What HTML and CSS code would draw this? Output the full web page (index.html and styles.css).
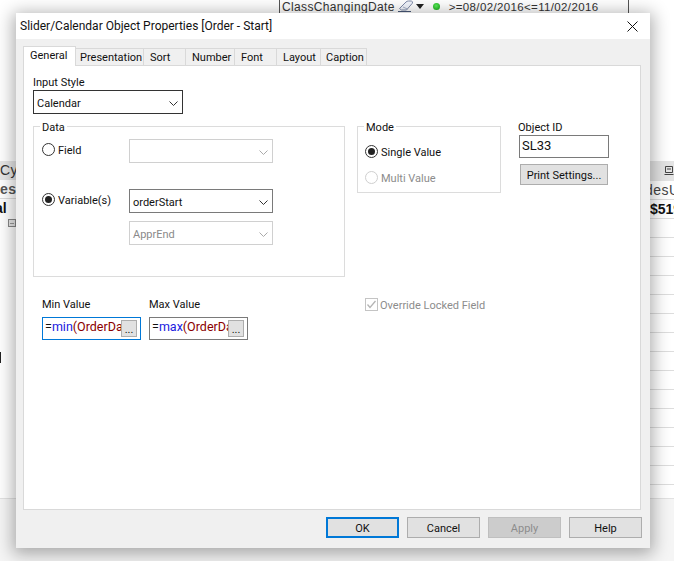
FILE: index.html
```html
<!DOCTYPE html>
<html lang="en">
<head>
<meta charset="utf-8">
<title>Slider/Calendar Object Properties</title>
<link rel="stylesheet" href="styles.css">
</head>
<body>
<div class="app">
  <div class="app-caption">
    <span class="caption-name">ClassChangingDate</span>
    <svg class="eraser" width="16" height="13" viewBox="0 0 16 13"><path d="M1.500 8.500 8 2q1-1 2.500-1h2.800q2 .5 1 2.300L8.500 10H3.500z" fill="#f2f5fc" stroke="#7f8aa8"/><path d="M5 7 9.500 9" stroke="#a9b4cc" fill="none"/><path d="M0 11.500h13" stroke="#4a5a7a"/></svg>
    <span class="caret"></span>
    <span class="led"></span>
    <span class="caption-value">&gt;=08/02/2016&lt;=11/02/2016</span>
  </div>
  <div class="left-frag">
    <div class="frag-head">Cyc</div>
    <div class="frag-row">es</div>
    <div class="frag-total">al</div>
    <div class="frag-minus"></div>
  </div>
  <div class="left-mark"></div>
  <div class="right-frag">
    <div class="rf-head"><svg width="10" height="10" viewBox="0 0 10 10"><path d="M1.500.5h7v6h-7zM.5 8.500h9M3 3h4" fill="none" stroke="#444"/></svg></div>
    <div class="rf-row">desU</div>
    <div class="rf-total">$519</div>
    <div class="rf-line"></div><div class="rf-line"></div><div class="rf-line"></div><div class="rf-line"></div>
    <div class="rf-line"></div><div class="rf-line"></div><div class="rf-line"></div><div class="rf-line"></div>
    <div class="rf-line"></div><div class="rf-line"></div><div class="rf-line"></div><div class="rf-line"></div>
    <div class="rf-line"></div><div class="rf-line"></div>
  </div>
  <div class="app-foot"></div>
</div>

<div class="dialog">
  <div class="titlebar">
    <span class="title">Slider/Calendar Object Properties [Order - Start]</span>
    <svg class="close" width="11" height="11" viewBox="0 0 11 11"><path d="M.5.500l10 10M10.500.500l-10 10" stroke="#111" fill="none"/></svg>
  </div>
  <div class="body">
    <div class="tabs">
      <div class="tab active">General</div>
      <div class="tab t-pres">Presentation</div>
      <div class="tab t-sort">Sort</div>
      <div class="tab t-num">Number</div>
      <div class="tab t-font">Font</div>
      <div class="tab t-lay">Layout</div>
      <div class="tab t-cap">Caption</div>
    </div>
    <div class="panel">
      <div class="field-label">Input Style</div>
      <div class="select input-style"><span>Calendar</span><svg class="chev" width="9" height="5" viewBox="0 0 9 5"><path d="M.5.500 4.500 4.500 8.500.500" fill="none" stroke="#333"/></svg></div>

      <div class="mid-row">
        <fieldset class="group data-group">
          <legend>Data</legend>
          <div class="data-grid">
            <div class="radio-line r-field"><span class="radio"></span><span class="radio-text">Field</span></div>
            <div class="select data-select disabled"><span></span><svg class="chev" width="9" height="5" viewBox="0 0 9 5"><path d="M.5.500 4.500 4.500 8.500.500" fill="none" stroke="#aaa"/></svg></div>
            <div class="radio-line r-var"><span class="radio on"></span><span class="radio-text">Variable(s)</span></div>
            <div class="select data-select s-var active-sel"><span>orderStart</span><svg class="chev" width="9" height="5" viewBox="0 0 9 5"><path d="M.5.500 4.500 4.500 8.500.500" fill="none" stroke="#333"/></svg></div>
            <div class="select data-select s-appr disabled"><span>ApprEnd</span><svg class="chev" width="9" height="5" viewBox="0 0 9 5"><path d="M.5.500 4.500 4.500 8.500.500" fill="none" stroke="#aaa"/></svg></div>
          </div>
        </fieldset>

        <fieldset class="group mode-group">
          <legend>Mode</legend>
          <div class="radio-line m-single"><span class="radio on"></span><span class="radio-text">Single Value</span></div>
          <div class="radio-line m-multi off"><span class="radio dim"></span><span class="radio-text">Multi Value</span></div>
        </fieldset>

        <div class="object-col">
          <div class="obj-label">Object ID</div>
          <div class="obj-input">SL33</div>
          <div class="btn print-btn">Print Settings...</div>
        </div>
      </div>

      <div class="value-row">
        <div class="value-col">
          <div class="field-label v-label">Min Value</div>
          <div class="expr focus"><span class="e-op">=</span><span class="e-fn">min</span><span class="e-ref">(OrderDa</span><span class="dots">...</span></div>
        </div>
        <div class="value-col">
          <div class="field-label v-label">Max Value</div>
          <div class="expr"><span class="e-op">=</span><span class="e-fn">max</span><span class="e-ref">(OrderDa</span><span class="dots">...</span></div>
        </div>
        <div class="override">
          <svg width="13" height="13" viewBox="0 0 13 13"><rect x=".5" y=".5" width="12" height="12" fill="#fff" stroke="#c4c4c4"/><path d="M2.500 6.500 5 9.500 10.500 3" fill="none" stroke="#b4b4b4" stroke-width="1.300"/></svg>
          <span class="override-text">Override Locked Field</span>
        </div>
      </div>
    </div>
    <div class="footer">
      <div class="btn foot ok">OK</div>
      <div class="btn foot">Cancel</div>
      <div class="btn foot apply">Apply</div>
      <div class="btn foot">Help</div>
    </div>
  </div>
</div>
</body>
</html>
```

FILE: styles.css
```css
* { box-sizing: border-box; }
html, body { margin: 0; padding: 0; }
body {
  width: 674px;
  height: 561px;
  position: relative;
  overflow: hidden;
  background: #fff;
  font-family: Roboto, "Liberation Sans", sans-serif;
  font-size: 11px;
  color: #111;
}

/* Application behind the dialog */
.app { position: absolute; inset: 0; background: #fff; color: #333; font-family: "Liberation Sans", sans-serif; }
.app-foot { position: absolute; left: 0; right: 0; top: 498px; bottom: 0; background: #f5f5f5; border-top: 1px solid #e2e2e2; }
.app-caption {
  position: absolute; left: 279px; top: 0; width: 350px; height: 13px;
  border-left: 1px solid #555; border-right: 1px solid #555;
  display: flex; align-items: center; padding-left: 2px;
  font-size: 12px; letter-spacing: .35px; white-space: nowrap;
}
.caption-name { color: #333; }
.eraser { margin-left: 3px; flex: none; }
.caret { width: 0; height: 0; margin-left: 2px; border: 4px solid transparent; border-top: 5px solid #222; border-bottom: 0; }
.led { width: 7px; height: 7px; margin-left: 9px; border-radius: 50%; background: radial-gradient(circle at 45% 40%, #5ef05e, #0ca00c); }
.caption-value { margin-left: 9px; font-size: 11.500px; letter-spacing: .36px; }

.left-frag { position: absolute; left: 0; top: 161px; width: 20px; overflow: hidden; font-weight: bold; font-size: 14px; }
.frag-head { height: 19px; background: #e6e6e6; line-height: 19px; font-weight: normal; letter-spacing: .5px; }
.frag-row { height: 19px; line-height: 19px; letter-spacing: .5px; border-bottom: 1px solid #ddd; color: #555; }
.frag-total { height: 19px; margin-left: -5px; line-height: 19px; color: #111; }
.frag-minus { width: 8px; height: 8px; margin: 1px 0 0 8px; border: 1px solid #888; background: linear-gradient(#999, #999) center / 4px 1px no-repeat #e8e8e8; }
.left-mark { position: absolute; left: 0; top: 352px; width: 1px; height: 11px; background: #222; }

.right-frag { position: absolute; left: 650px; top: 161px; width: 24px; overflow: hidden; }
.rf-head { height: 20px; background: #e4e4e4; display: flex; align-items: center; padding-left: 14px; }
.rf-row { height: 19px; line-height: 19px; font-size: 14px; margin-left: -5px; white-space: nowrap; letter-spacing: .5px; color: #444; border-bottom: 1px solid #ddd; }
.rf-total { height: 19px; line-height: 18px; font-size: 14px; font-weight: bold; color: #111; white-space: nowrap; border-bottom: 1px solid #ddd; }
.rf-line { height: 19px; border-bottom: 1px solid #ddd; }

/* Dialog window */
.dialog {
  position: absolute; left: 16px; top: 13px; width: 634px; height: 535px;
  display: flex; flex-direction: column;
  background: #f0f0f0;
  box-shadow: 0 3px 16px 3px rgba(0, 0, 0, .32);
}
.titlebar { height: 26px; background: #fff; display: flex; align-items: center; justify-content: space-between; padding: 0 12px 0 4px; flex: none; }
.title { font-size: 12px; color: #111; }
.body { flex: 1; display: flex; flex-direction: column; padding: 8px 9px 0 7px; }

.tabs { display: flex; align-items: flex-end; height: 19px; flex: none; position: relative; z-index: 1; margin-bottom: -1px; }
.tab {
  height: 18px; line-height: 18px; padding-left: 5px; width: 56px;
  background: #f0f0f0; border: 1px solid #d9d9d9; border-left: 0; border-bottom: 1px solid #d9d9d9;
  white-space: nowrap;
}
.tab.active { height: 20px; width: 53px; background: #fff; border-left: 1px solid #d9d9d9; border-bottom: 0; padding-left: 6px; line-height: 18px; }
.t-pres { width: 68px; padding-left: 4px; } .t-sort { width: 42px; padding-left: 6px; } .t-num { width: 49px; padding-left: 6px; } .t-font { width: 42px; padding-left: 6px; } .t-lay { width: 44px; padding-left: 6px; } .t-cap { width: 46px; padding-left: 5px; }

.panel { height: 445px; flex: none; width: 618px; background: #fff; border: 1px solid #d9d9d9; padding: 9px 0 0 9px; }
.field-label { height: 13px; line-height: 15px; }

.select {
  display: flex; align-items: center; justify-content: space-between;
  background: #fff; border: 1px solid #333; padding: 2px 4px 0 3px;
}
.chev { flex: none; }
.input-style { width: 150px; height: 24px; margin-top: 2px; }
.disabled { border-color: #d0d0d0; color: #8a8a8a; }
.active-sel { border-color: #7a7a7a; }

.mid-row { display: flex; align-items: flex-start; margin-top: 5px; }
.group { margin: 0; padding: 0; border: 1px solid #dcdcdc; position: relative; min-width: 0; }
.group legend { padding: 0 2px; margin-left: 6px; height: 14px; line-height: 17px; }

.data-group { width: 312px; height: 158px; }
.data-grid { display: grid; grid-template-columns: 87px 144px; grid-template-rows: 24px 26px 24px 8px 24px; padding: 6px 0 0 8px; }
.r-field { grid-column: 1; grid-row: 1; align-self: start; }
.data-select { grid-column: 2; height: 24px; }
.data-grid > .data-select:nth-child(2) { grid-row: 1; }
.r-var { grid-column: 1; grid-row: 3; align-self: start; }
.s-var { grid-row: 3; }
.s-appr { grid-row: 5; }

.radio-line { display: flex; align-items: center; gap: 3px; height: 20px; }
.radio-text { padding-top: 2px; }
.radio { width: 13px; height: 13px; border-radius: 50%; border: 1px solid #333; background: #fff; flex: none; position: relative; }
.radio.on::after { content: ""; position: absolute; inset: 2px; border-radius: 50%; background: #222; }
.radio.dim { border-color: #cfcfcf; }
.off { color: #8c8c8c; }

.mode-group { width: 144px; height: 74px; margin-left: 12px; }
.m-single { margin: 8px 0 0 7px; }
.m-multi { margin: 6px 0 0 7px; }

.object-col { margin-left: 17px; width: 92px; padding-top: 1px; }
.obj-label { height: 13px; line-height: 15px; }
.obj-input { width: 90px; height: 23px; margin: 2px 0 0 1px; border: 1px solid #7a7a7a; background: #fff; padding-left: 2px; line-height: 19px; font-size: 13px; }
.btn { display: flex; align-items: center; justify-content: center; background: #e1e1e1; border: 1px solid #adadad; padding-top: 2px; }
.print-btn { width: 88px; height: 21px; margin: 6px 0 0 2px; }

.value-row { display: flex; align-items: flex-start; margin-top: 20px; padding-left: 9px; }
.value-col { width: 99px; margin-right: 8px; }
.v-label { height: 13px; }
.expr {
  margin-top: 7px; height: 23px; position: relative; overflow: hidden;
  border: 1px solid #7a7a7a; background: #fff; padding-left: 2px;
  line-height: 18px; white-space: nowrap; font-size: 12.500px;
}
.expr.focus { border-color: #0078d7; }
.e-op { color: #111; } .e-fn { color: #2020e0; } .e-ref { color: #8b0000; }
.dots {
  position: absolute; right: 3px; top: 2px; width: 16px; height: 17px;
  background: #e1e1e1; border: 1px solid #adadad; color: #111;
  font-size: 11px; line-height: 18px; text-align: center;
}
.override { display: flex; align-items: center; gap: 2px; height: 15px; color: #8c8c8c; margin-left: 109px; }
.override-text { padding-top: 2px; }

.footer { display: flex; justify-content: flex-end; gap: 8px; padding: 7px 0 0; margin-right: -1px; }
.foot { width: 73px; height: 21px; }
.ok { border: 2px solid #0078d7; padding-top: 1px; }
.apply { background: #cccccc; color: #8c8c8c; border-color: #bfbfbf; }
```
